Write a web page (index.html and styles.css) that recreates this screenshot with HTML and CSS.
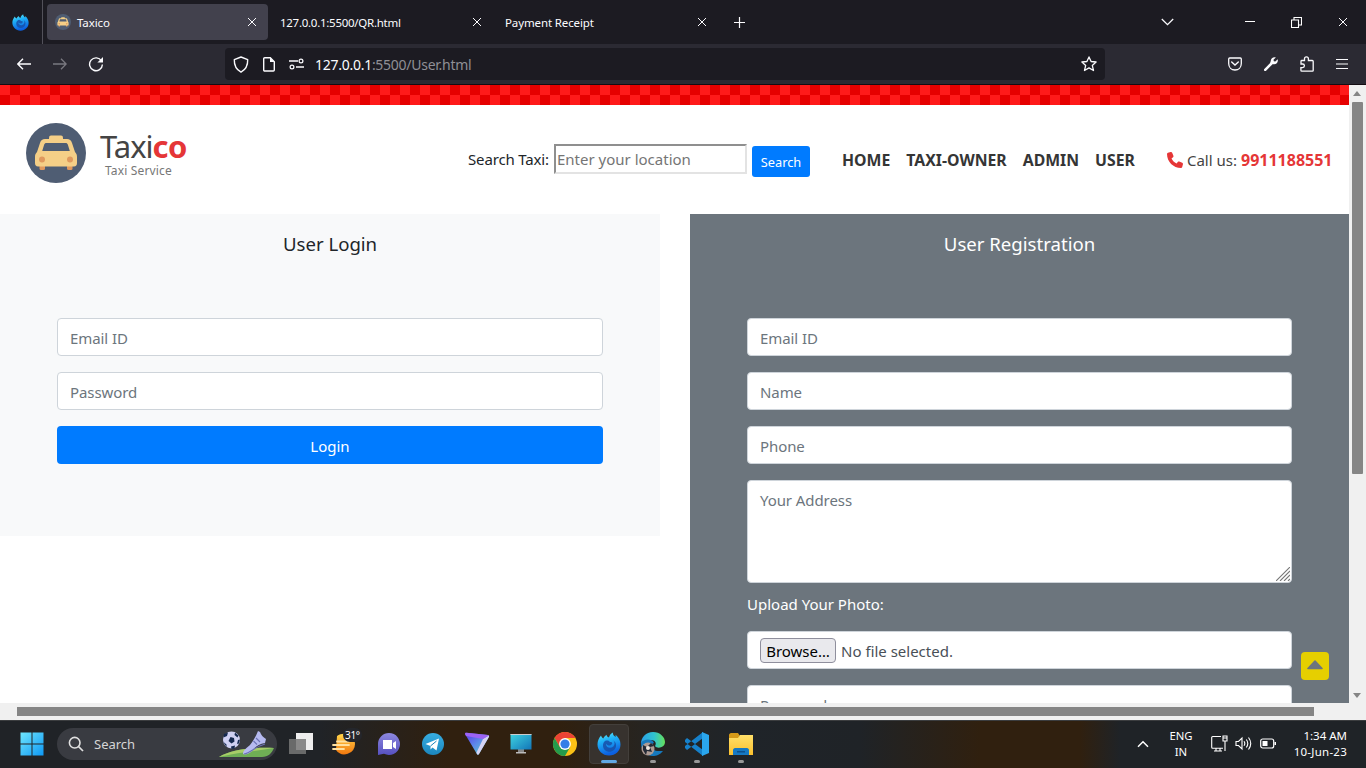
FILE: index.html
```html
<!DOCTYPE html>
<html lang="en">
<head>
<meta charset="utf-8">
<title>Taxico</title>
<link rel="stylesheet" href="styles.css">
</head>
<body>
<svg class="defs" width="0" height="0">
  <defs>
    <linearGradient id="fx" x1="0" y1="0" x2="0.3" y2="1"><stop offset="0" stop-color="#6ff0f5"/><stop offset=".4" stop-color="#20b4f8"/><stop offset="1" stop-color="#0c5fe0"/></linearGradient>
    <linearGradient id="win" x1="0" y1="0" x2="1" y2="1"><stop offset="0" stop-color="#6fe6fc"/><stop offset="1" stop-color="#0e98f5"/></linearGradient>
    <linearGradient id="sun" x1="0" y1="0" x2="0" y2="1"><stop offset="0" stop-color="#ffd54a"/><stop offset="1" stop-color="#f2780f"/></linearGradient>
    <linearGradient id="chat" x1="0" y1="0" x2="0" y2="1"><stop offset="0" stop-color="#8d88df"/><stop offset="1" stop-color="#5650c0"/></linearGradient>
    <linearGradient id="tele" x1="0" y1="0" x2="0" y2="1"><stop offset="0" stop-color="#37aee2"/><stop offset="1" stop-color="#1b86bd"/></linearGradient>
    <linearGradient id="vpn" x1="0" y1="0" x2="1" y2="1"><stop offset="0" stop-color="#5b35e8"/><stop offset=".5" stop-color="#5d8de8"/><stop offset="1" stop-color="#5de3b4"/></linearGradient>
    <linearGradient id="pc" x1="0" y1="0" x2="1" y2="1"><stop offset="0" stop-color="#3fd3df"/><stop offset="1" stop-color="#1275b8"/></linearGradient>
    <linearGradient id="edge" x1="0" y1="0" x2="1" y2="0"><stop offset="0" stop-color="#2a9fe8"/><stop offset=".55" stop-color="#30c4cf"/><stop offset="1" stop-color="#66e05a"/></linearGradient>
    <linearGradient id="fold" x1="0" y1="0" x2="0" y2="1"><stop offset="0" stop-color="#ffe06a"/><stop offset="1" stop-color="#fbc02d"/></linearGradient>
    <symbol id="taxi" viewBox="0 0 60 60">
      <circle cx="30" cy="30" r="30" fill="#4f5d73"/>
      <rect x="13.500" y="41" width="5.500" height="6" rx="1.500" fill="#e0995e"/><rect x="41" y="41" width="5.500" height="6" rx="1.500" fill="#e0995e"/>
      <rect x="23" y="12.500" width="14" height="6" rx="2" fill="#f5cf87"/>
      <path d="M19 16h22c2.500 0 4 1 5 4l3 9c1.500 1.500 2 3 2 5v6c0 2-1 3.500-3 3.500H12c-2 0-3-1.500-3-3.500v-6c0-2 .5-3.500 2-5l3-9c1-3 2.500-4 5-4z" fill="#f5cf87"/>
      <path d="M20.500 20h19c1.300 0 2 .6 2.300 1.600l2 6.400H16.200l2-6.400c.3-1 1-1.600 2.300-1.600z" fill="#4f5d73"/>
      <circle cx="16" cy="36.500" r="3" fill="#e0995e"/><circle cx="44" cy="36.500" r="3" fill="#e0995e"/>
    </symbol>
    <symbol id="firefox" viewBox="0 0 24 24">
      <path d="M4 3.500C4.500 5 5.300 5.800 6.300 6.500 7 4.500 8.500 3.800 9.500 2.800c.3 1.500 1 2.200 2.500 2.700C12.500 3 13.800 1.500 15.800.4c0 2.300 1.200 3.200 2.700 4.600.3-.8.300-1.500 0-2.300 3 2.300 5 5.600 5 9.800C23.500 19 18.500 23.500 12 23.500S.5 18.500.5 12.500C.5 9 1.800 6 4 3.500z" fill="url(#fx)"/>
      <path d="M8 9c2-.8 4-.3 4.800 1 3.200-.1 3 2 1.200 3-1.800 1.100-4.200.3-4.800-1.300-.8 3.300 4 5.500 7 3 2-2 1.800-5-.2-6.500 3.800 2 4 7.300 1 9.800-4 3.500-10.500 1.500-11-4C5.900 12 6.500 10.200 8 9z" fill="#174fa8" opacity=".85"/>
    </symbol>
    <symbol id="cross" viewBox="0 0 10 10"><path d="M1 1l8 8M9 1L1 9" stroke="#fbfbfe" stroke-width="1" fill="none"/></symbol>
  </defs>
</svg>

<header class="tabs">
  <div class="view-btn"><svg width="17" height="17"><use href="#firefox"/></svg></div>
  <div class="tab active"><svg width="16" height="16"><use href="#taxi"/></svg><span class="tab-name t1">Taxico</span><svg class="x" width="10" height="10"><use href="#cross"/></svg></div>
  <div class="tab"><span class="tab-name t2">127.0.0.1:5500/QR.html</span><svg class="x" width="10" height="10"><use href="#cross"/></svg></div>
  <div class="tab"><span class="tab-name t3">Payment Receipt</span><svg class="x" width="10" height="10"><use href="#cross"/></svg></div>
  <svg class="plus" width="13" height="13" viewBox="0 0 13 13"><path d="M6.500 1v11M1 6.500h11" stroke="#fbfbfe" stroke-width="1.200"/></svg>
  <div class="window-btns">
    <svg width="13" height="8" viewBox="0 0 13 8"><path d="M.8 1l5.700 5.700L12.200 1" stroke="#fbfbfe" stroke-width="1.300" fill="none"/></svg>
    <svg width="10" height="10" viewBox="0 0 10 10"><path d="M0 4.500h10" stroke="#fff"/></svg>
    <svg width="11" height="11" viewBox="0 0 11 11"><path d="M.5 3h7v7.500h-7zM3 3V.5h7.500V8H7.700" stroke="#fff" stroke-width="1.100" fill="none"/></svg>
    <svg width="10" height="10"><use href="#cross"/></svg>
  </div>
</header>

<nav class="toolbar">
  <svg class="back" width="14" height="12" viewBox="0 0 14 12"><path d="M14 6H1M6 .7L.8 6 6 11.300" stroke="#fbfbfe" stroke-width="1.400" fill="none"/></svg>
  <svg class="fwd" width="14" height="12" viewBox="0 0 14 12"><path d="M0 6h13M8 .7L13.200 6 8 11.300" stroke="#7a7981" stroke-width="1.300" fill="none"/></svg>
  <svg class="reload" width="16" height="16" viewBox="0 0 16 16"><path d="M13.500 5A6.400 6.400 0 1 0 14.400 8.500" stroke="#fbfbfe" stroke-width="1.400" fill="none"/><path d="M15 1v5.600H9.400z" fill="#fbfbfe"/></svg>
  <div class="url">
    <svg width="16" height="17" viewBox="0 0 16 17"><path d="M8 1l6.700 2.600c.2 6-1.700 10-6.700 12.600C3 13.600 1.100 9.600 1.300 3.600z" stroke="#fbfbfe" stroke-width="1.400" fill="none" stroke-linejoin="round"/></svg>
    <svg width="12" height="15" viewBox="0 0 12 15"><path d="M1.700.8h5.600l4 4v8.200a1 1 0 0 1-1 1H1.700a1 1 0 0 1-1-1V1.800a1 1 0 0 1 1-1z" stroke="#fbfbfe" stroke-width="1.400" fill="none"/><path d="M7 .5V5h4.500z" fill="#fbfbfe"/></svg>
    <svg width="16" height="12" viewBox="0 0 16 12"><path d="M0 3h9M7 9h8" stroke="#fbfbfe" stroke-width="1.300"/><circle cx="12" cy="3" r="1.900" stroke="#fbfbfe" stroke-width="1.200" fill="none"/><circle cx="3" cy="9" r="1.900" stroke="#fbfbfe" stroke-width="1.200" fill="none"/></svg>
    <span class="addr"><b>127.0.0.1</b>:5500/User.html</span>
    <svg class="star" width="16" height="16" viewBox="0 0 16 16"><path d="M8 .9l2.100 4.600 5 .5-3.800 3.400 1.200 5.100L8 11.900l-4.500 2.600 1.200-5.100L.9 6l5-.5z" stroke="#fbfbfe" stroke-width="1.300" fill="none" stroke-linejoin="round"/></svg>
  </div>
  <div class="tools">
    <svg width="14" height="14" viewBox="0 0 14 14"><path d="M1.700 1h10.600c.6 0 1 .4 1 1v4.500C13.300 10.500 10.500 13 7 13S.7 10.500.7 6.500V2c0-.6.400-1 1-1z" stroke="#fbfbfe" stroke-width="1.300" fill="none"/><path d="M3.700 5L7 8l3.300-3" stroke="#fbfbfe" stroke-width="1.400" fill="none" stroke-linecap="round"/></svg>
    <svg width="14" height="14" viewBox="0 0 14 14"><path d="M1.200 12.800L8.500 5.500" stroke="#fbfbfe" stroke-width="2.500" stroke-linecap="round"/><path d="M11.800.4L9.500 2.700l.3 1.500 1.500.3 2.400-2.300c.8 3.200-1.500 5.600-4.300 5.100L6.200 6.500 6.700 4C6.900 1.500 9-.3 11.800.4z" fill="#fbfbfe"/></svg>
    <svg width="14" height="16" viewBox="0 0 14 16"><path d="M1 8V5.300c0-.5.300-.8.800-.8h2.700V2.800a1.900 1.900 0 0 1 3.900 0v1.700h3.900c.5 0 .9.400.9.900v9c0 .4-.3.800-.8.800H1.800a.9.900 0 0 1-.9-.9v-2.700h1.700A1.800 1.800 0 0 0 2.600 8z" stroke="#fbfbfe" stroke-width="1.300" fill="none"/></svg>
    <svg width="12" height="12" viewBox="0 0 12 12"><path d="M0 1.500h12M0 6h12M0 10.500h12" stroke="#fbfbfe" stroke-width="1.200"/></svg>
  </div>
</nav>

<div class="viewport">
  <div class="page">
    <div class="checker"></div>
    <div class="site-head">
      <svg class="logo" width="60" height="60"><use href="#taxi"/></svg>
      <div class="brand"><div class="name">Taxi<b>co</b></div><div class="tagline">Taxi Service</div></div>
      <span class="search-label">Search Taxi:</span>
      <div class="search-input"><span>Enter your location</span></div>
      <div class="search-btn"><span>Search</span></div>
      <nav class="menu"><b>HOME</b><b>TAXI-OWNER</b><b>ADMIN</b><b>USER</b></nav>
      <div class="call"><svg width="16" height="16" viewBox="0 0 512 512"><path fill="#e53637" d="M164.900 24.600c-7.700-18.600-28-28.500-47.400-23.200l-88 24C12.100 30.200 0 46 0 64c0 247.400 200.600 448 448 448 18 0 33.800-12.100 38.600-29.500l24-88c5.300-19.400-4.600-39.700-23.200-47.400l-96-40c-16.300-6.800-35.200-2.100-46.300 11.600L304.700 368C234.300 334.700 177.300 277.700 144 207.300l49.300-40.300c13.700-11.200 18.400-30 11.600-46.300z"/></svg><span>Call us:</span><b>9911188551</b></div>
    </div>
    <div class="panels">
      <section class="panel login">
        <h2>User Login</h2>
        <div class="form">
          <div class="field"><span>Email ID</span></div>
          <div class="field"><span>Password</span></div>
          <div class="login-btn"><span>Login</span></div>
        </div>
      </section>
      <section class="panel register">
        <h2>User Registration</h2>
        <div class="form">
          <div class="field"><span>Email ID</span></div>
          <div class="field"><span>Name</span></div>
          <div class="field"><span>Phone</span></div>
          <div class="field area"><span>Your Address</span><svg class="grip" width="14" height="14" viewBox="0 0 14 14"><path d="M0 14L14 0M4 14L14 4M8 14l6-6M12 14l2-2" stroke="#777" stroke-width="1.100"/></svg></div>
          <div class="label"><span>Upload Your Photo:</span></div>
          <div class="field file"><span class="browse"><span>Browse…</span></span><span class="file-name">No file selected.</span></div>
          <div class="field"><span>Password</span></div>
        </div>
      </section>
    </div>
    <div class="to-top"><svg width="16" height="10" viewBox="0 0 16 10"><path d="M8 1L1 8.500h14z" fill="#6c757d" stroke="#6c757d" stroke-width="1.600" stroke-linejoin="round"/></svg></div>
  </div>
  <div class="vbar"><i class="up"></i><div class="vthumb"></div><i class="down"></i></div>
  <div class="hbar"><div class="hthumb"></div></div>
</div>

<footer class="taskbar">
  <svg class="start" width="24" height="24" viewBox="0 0 24 24"><path d="M.5.500h11v11H.5zM12.500.5h11v11h-11zM.5 12.500h11v11H.5zM12.500 12.500h11v11h-11z" fill="url(#win)"/></svg>
  <div class="task-search">
    <svg width="16" height="16" viewBox="0 0 16 16"><circle cx="6.700" cy="6.700" r="5.300" stroke="#e0e0e0" stroke-width="1.600" fill="none"/><path d="M10.500 10.500L15 15" stroke="#e0e0e0" stroke-width="1.700"/></svg>
    <span>Search</span>
    <svg class="sport" width="56" height="28" viewBox="0 0 56 28"><path d="M0 27C12 20 32 17 55 18c-2 5-6 9-12 9z" fill="#6fae55"/><path d="M0 27C12 20 32 17 55 18c-16 3-36 4-55 9z" fill="#a8cc68"/><circle cx="12.500" cy="10" r="8.500" fill="#cfd0f2"/><path d="M11.500 7l3.500 1 .5 3.500-3 2-3-2.500zM5 4l4-1.500-1 3.500-3.500 1.500zM16 2.500l3.500 3-1 2-3-2.500zM4 11.500l3.500 3v2.500zM12 16.500l4-1-.5 3-3 .5zM19 10l2-.5-1 4-2 .5z" fill="#16294f"/><path d="M39 1l2 1c1 3 3 5 6 7l-1 4c-6 1-9 3-13 8-3 3-7 4-9 3 0-4 4-6 7-9C35 10 37 6 39 1z" fill="#b6baf0"/><path d="M37 8l4 4M34.500 11l3.500 3.500M25 24c7-1 10-7 21-10" stroke="#6a71b4" stroke-width="1.100" fill="none"/></svg>
  </div>
  <svg class="app" width="26" height="24" viewBox="0 0 26 24"><path d="M8 1h17v17H8z" fill="#eee"/><path d="M1 7h17v15H1z" fill="#777" opacity=".85"/></svg>
  <div class="app weather"><svg width="24" height="24" viewBox="0 0 24 24"><path d="M5 4C12-1 23 3 23 12a10.500 10.500 0 0 1-19 6z" fill="url(#sun)"/><path d="M1 13h16M5 9.500h12M1 17h11" stroke="#ffe0a0" stroke-width="1.800" stroke-linecap="round"/></svg><span>31°</span></div>
  <svg class="app" width="26" height="24" viewBox="0 0 26 24"><path d="M13 1a11 11 0 1 1-5 20.800L2 23V12A11 11 0 0 1 13 1z" fill="url(#chat)"/><path d="M7 8h9v9H7zM17 11l3-2v8l-3-2z" fill="#fff"/></svg>
  <svg class="app" width="24" height="24" viewBox="0 0 24 24"><circle cx="12" cy="12" r="11" fill="url(#tele)"/><path d="M4.500 12L18 6.500l-2.500 12-4-3-2 2v-3.600z" fill="#fff"/><path d="M9.500 14l6-5" stroke="#1b86bd"/></svg>
  <svg class="app" width="26" height="24" viewBox="0 0 26 24"><path d="M1 2c0-1 .7-1.400 1.500-1.300L24 3c1.100.3 1.400 1 .9 2L15 22c-.4.900-1.600 1.100-2.100 0z" fill="url(#vpn)"/><path d="M19 7l5.500-3.500c.7.400.7 1 .4 1.500L15 22c-.4.900-1.600 1.100-2.100 0l-.4-1.500z" fill="#d5d3f4"/><path d="M1 2c0-1 .7-1.400 1.500-1.300L24 3c.5.100.8.300 1 .6L19 7 2 4z" fill="#9c63f5"/></svg>
  <svg class="app" width="24" height="24" viewBox="0 0 24 24"><path d="M9 17h6v4H9z" fill="#888"/><path d="M7 20h10v1.500H7z" fill="#bbb"/><path d="M1.500 2h21v15.500h-21z" fill="url(#pc)"/><path d="M1.500 2h21v1h-21z" fill="#ccc"/></svg>
  <svg class="app" width="24" height="24" viewBox="0 0 24 24"><circle cx="12" cy="12" r="12" fill="#fbc116"/><path d="M12 12L6.800 15 1.600 6A12 12 0 0 1 22.400 6H12z" fill="#ea4335"/><path d="M1.600 6A12 12 0 0 0 12 24l5.200-9L12 12l-5.200 3z" fill="#249b4c"/><circle cx="12" cy="12" r="5.900" fill="#fff"/><circle cx="12" cy="12" r="4.600" fill="#347ee8"/></svg>
  <div class="app running current"><svg width="24" height="24"><use href="#firefox"/></svg></div>
  <div class="app running"><svg width="26" height="24" viewBox="0 0 26 24"><path d="M1 12C1 5 6 0 13 0s12 5 12 10c0 6-8 7-10 4 2-3 0-6-4-6-5 0-9 2-10 4z" fill="url(#edge)"/><path d="M1 11c2-4 11-5 13 0-4 1-3 7 3 8h6c-3 4-7 5-10 5C6 24 1 19 1 11z" fill="#1679bd"/><circle cx="8" cy="17" r="6.500" fill="#ad9b93"/><path d="M3 13l4 2 4-4 3 3-4 1 2 5-5-1-1 4-3-5z" fill="#232a36"/><circle cx="8" cy="16" r="2" fill="#f0e8e0"/></svg></div>
  <div class="app running"><svg width="26" height="24" viewBox="0 0 26 24"><path d="M1 8l2-2 16 12v6L1 10zM1 16l2 2L19 6V0L1 14z" fill="#1681cb"/><path d="M18 0l7 3v18l-7 3z" fill="#2aa6ed"/></svg></div>
  <div class="app running"><svg width="26" height="24" viewBox="0 0 26 24"><path d="M1 3c0-1 1-2 2-2h7l2 3h-1v5H1z" fill="#d69a18"/><path d="M1 6h9l2-3h13v20H1z" fill="url(#fold)"/><path d="M5 23v-5c0-1 1-2 2-2h12c1 0 2 1 2 2v5z" fill="#1578c2"/><path d="M9 19h8v1.500H9z" fill="#0b4f8c"/></svg></div>
  <div class="tray">
    <svg width="12" height="8" viewBox="0 0 12 8"><path d="M1 6.700L6 1.700l5 5" stroke="#fff" stroke-width="1.500" fill="none"/></svg>
    <div class="lang"><span>ENG</span><span>IN</span></div>
    <svg class="net" width="17" height="17" viewBox="0 0 17 17"><path d="M10 1.500H1.700a1 1 0 0 0-1 1v9.800a1 1 0 0 0 1 1H12M5 13v3M9 13v3M3 16h8M12 1h4v5h-4zM14 6v10M12 3h4" stroke="#fff" stroke-width="1.100" fill="none"/></svg>
    <svg class="vol" width="17" height="15" viewBox="0 0 17 15"><path d="M1 5.500h2.500L7 2v11L3.500 9.500H1z" stroke="#fff" stroke-width="1.100" fill="none"/><path d="M9 5.300q1.600 2.200 0 4.400M11.300 3.500q3 4 0 8M13.500 1.500q4.500 6 0 12" stroke="#fff" stroke-width="1.100" fill="none"/></svg>
    <svg class="bat" width="17" height="11" viewBox="0 0 17 11"><rect x=".7" y="1" width="13" height="9" rx="2" stroke="#fff" stroke-width="1.200" fill="none"/><path d="M2.500 3h5v5h-5zM14.500 4h1.500v3h-1.500z" fill="#fff"/></svg>
    <div class="clock"><span>1:34 AM</span><span class="date">10-Jun-23</span></div>
  </div>
</footer>
</body>
</html>
```
FILE: styles.css
```css
* { box-sizing: border-box; }
body { margin: 0; width: 1366px; height: 768px; overflow: hidden; font: 15px/20px "Noto Sans", "Open Sans", sans-serif; color: #212529; background: #fff; display: flex; flex-direction: column; }
svg { display: block; flex: none; }
span, b { white-space: nowrap; }
.defs { position: absolute; }

.tabs { height: 44px; background: #1c1b22; display: flex; align-items: center; flex: none; }
.view-btn { width: 43px; height: 44px; border-right: 1px solid #52515a; display: flex; align-items: center; padding-left: 12px; margin-right: 4px; }
.tab { width: 221px; height: 36px; margin-right: 4px; border-radius: 4px; padding: 0 11px 0 8px; display: flex; align-items: center; color: #fbfbfe; font-size: 11.5px; }
.tab.active { background: #42414d; }
.tab .x { margin-left: auto; }
.tab-name { padding-top: 1px; }
.t1 { margin-left: 6px; letter-spacing: -.1px; }
.t2 { letter-spacing: -.27px; }
.t3 { letter-spacing: -.12px; }
.plus { margin-left: 11px; }
.window-btns { margin-left: auto; padding-right: 18px; display: flex; align-items: center; }
.window-btns svg:nth-child(2) { margin-left: 71px; }
.window-btns svg:nth-child(3) { margin-left: 36px; }
.window-btns svg:nth-child(4) { margin-left: 36px; }

.toolbar { height: 41px; flex: none; background: #2b2a33; border-bottom: 1px solid #140c12; display: flex; align-items: center; padding-left: 17px; }
.fwd { margin-left: 22px; }
.reload { margin-left: 21px; }
.url { margin-left: 121px; width: 880px; height: 32px; border-radius: 4px; background: #1c1b22; display: flex; align-items: center; padding: 0 8px; color: #8f8f95; font-size: 14px; }
.url svg + svg { margin-left: 14px; }
.addr { margin-left: 10px; padding-top: 2px; letter-spacing: -.27px; }
.addr b { font-weight: 400; color: #fbfbfe; }
.star { margin-left: auto; }
.tools { margin-left: auto; padding-right: 18px; display: flex; align-items: center; gap: 22px; }
.tools svg:first-child { margin-left: -1px; margin-right: 0; }

.viewport { height: 635px; flex: none; display: grid; grid-template: 618px 17px / 1349px 17px; background: #f0f0f0; }
.page { overflow: hidden; position: relative; background: #fff; }
.checker { height: 20px; background: conic-gradient(#e60000 25%, #ff1a1a 25% 50%, #e60000 50% 75%, #ff1a1a 75%) 0 0 / 20px 20px; }
.site-head { height: 109px; display: flex; align-items: flex-start; padding: 18px 0 0 26px; }
.brand { width: 100px; margin-left: 14px; padding-top: 6px; }
.name { font-size: 31px; line-height: 35px; color: #444; letter-spacing: -1px; }
.name b { color: #e53637; letter-spacing: -.5px; }
.tagline { font-size: 12px; line-height: 14px; margin-left: 5px; color: #777; white-space: nowrap; letter-spacing: .15px; }
.search-label { margin: 26px 0 0 268px; width: 86px; letter-spacing: -.15px; }
.search-input { width: 193px; height: 30px; margin-top: 21px; border: 2px solid; border-color: #8f8f8f #e3e3e3 #e3e3e3 #8f8f8f; padding: 3px 1px; color: #757575; }
.search-btn { width: 58px; height: 31px; margin: 23px 0 0 5px; border-radius: 3px; background: #007bff; color: #fff; font-size: 12.8px; text-align: center; line-height: 32px; }
.menu { display: flex; gap: 16px; margin: 27px 0 0 32px; color: #353535; }
.call { display: flex; margin: 27px 0 0 32px; color: #444; }
.call svg { margin-top: 2px; }
.call span { margin-left: 4px; }
.call b { color: #e53637; margin-left: 4px; }
.menu b { font-size: 15.8px; }
.call b { font-size: 16px; }

.panels { display: flex; justify-content: space-between; align-items: flex-start; }
.panel { padding: 20px 57px 0; }
.panel h2 { margin: 0; font-size: 18.6px; line-height: 20px; font-weight: 400; text-align: center; }
.login { width: 660px; height: 322px; background: #f8f9fa; }
.register { width: 659px; height: 560px; background: #6c757d; color: #fff; }
.form { margin-top: 64px; display: flex; flex-direction: column; gap: 16px; }
.field { height: 38px; border: 1px solid #ced4da; border-radius: 4px; background: #fff; color: #6c757d; padding: 9px 12px; letter-spacing: -.08px; }
.area { height: 103px; position: relative; }
.grip { position: absolute; right: 1px; bottom: 1px; }
.login-btn { height: 38px; border-radius: 4px; background: #007bff; color: #fff; text-align: center; line-height: 40px; }
.label { height: 20px; margin: -5px 0 1px; }
.file { color: #495057; display: flex; align-items: center; padding: 0 12px; letter-spacing: 0; }
.file-name { padding-top: 1px; }
.browse { width: 76px; height: 25px; border: 1px solid #8f8f9d; border-radius: 4px; background: #e9e9ed; color: #000; text-align: center; line-height: 24px; margin-right: 5px; }
.to-top { position: absolute; left: 1301px; top: 567px; width: 28px; height: 28px; border-radius: 4px; background: #e6cf00; display: flex; justify-content: center; padding-top: 8px; }
.vbar { display: flex; flex-direction: column; align-items: center; padding: 6px 3px 5px 2px; }
.up { border: 4px solid transparent; border-top: 0; border-bottom: 5px solid #858585; }
.down { border: 4px solid transparent; border-bottom: 0; border-top: 5px solid #858585; margin-top: auto; }
.vthumb { width: 11px; height: 372px; margin-top: 6px; border-radius: 1px; background: #858585; }
.hbar { grid-column: 1 / 3; padding: 4px 0 0 17px; }
.hthumb { width: 1297px; height: 9px; background: #858585; }

.taskbar { height: 48px; flex: none; display: flex; align-items: center; padding: 0 0 2px 20px; color: #fff; border-top: 1px solid #3b3d3f; background: linear-gradient(90deg, #202327 0, #202327 320px, #30200f 450px, #30200f 560px, #272420 640px, #1f2429 740px, #1f2327 860px, #30200f 980px, #30200f 1080px, #1f2327 1120px); }
.task-search { width: 220px; height: 32px; margin-left: 13px; border-radius: 16px; background: #393b41; display: flex; align-items: center; padding: 0 2px 0 11px; color: #d5d5d5; font-size: 13px; }
.task-search span { margin-left: 10px; }
.sport { margin-left: auto; }
.app { width: 26px; margin-right: 18px; }
.task-search + .app { margin-left: 11px; }
.weather { position: relative; }
.weather span { position: absolute; left: 11px; top: -4px; background: #24262b; border-radius: 8px; padding: 0 2px; font-size: 10px; line-height: 14px; letter-spacing: -.3px; }
.running { width: 40px; height: 40px; margin: 0 4px 0 0; border-radius: 4px; display: flex; flex-direction: column; align-items: center; padding-top: 8px; }
.running::after { content: ""; width: 6px; height: 3px; border-radius: 2px; background: #989898; margin-top: 4px; flex: none; }
.current { background: #37322e; border: 1px solid #433f3b; padding-top: 7px; margin-left: -7px; }
.current::after { width: 16px; background: #60a8e4; }
.tray { margin-left: auto; padding-right: 19px; display: flex; align-items: center; }
.lang { width: 26px; margin-left: 19px; display: flex; flex-direction: column; align-items: center; font-size: 11.3px; line-height: 16px; padding-top: 1px; }
.net { margin-left: 17px; }
.vol { margin-left: 7px; }
.bat { margin-left: 8px; }
.clock { margin-left: 14px; width: 56px; display: flex; flex-direction: column; align-items: flex-end; font-size: 11.5px; line-height: 16px; }
.date { letter-spacing: .25px; }
```
